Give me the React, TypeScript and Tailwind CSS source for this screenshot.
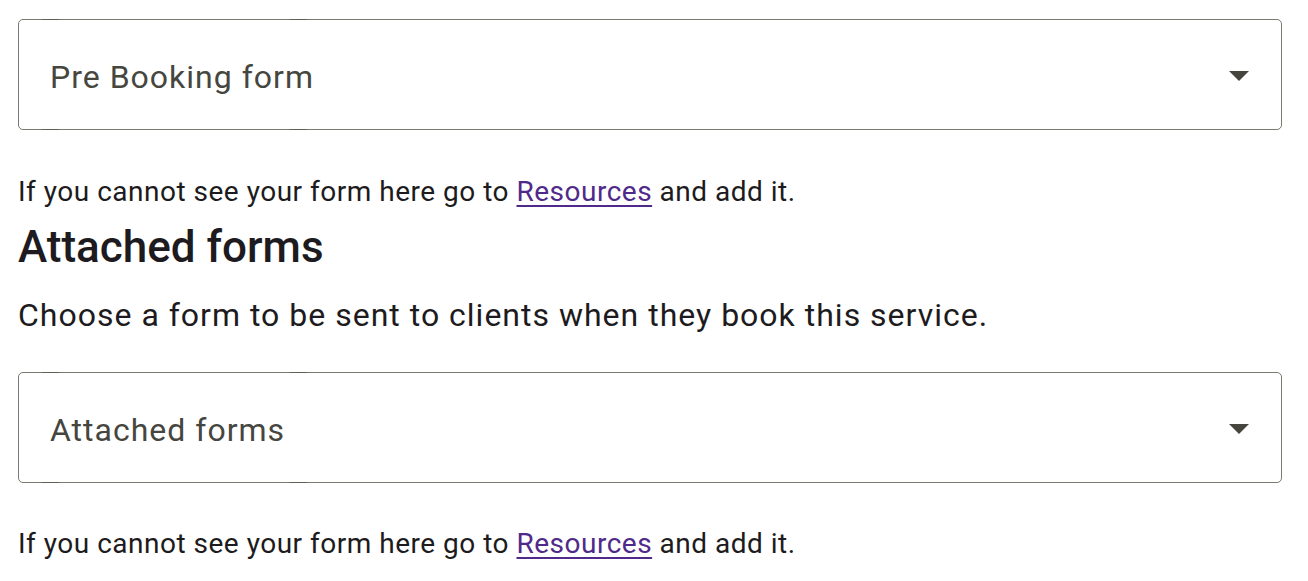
import React from "react";

interface SelectBoxProps {
  label: string;
}

function SelectBox({ label }: SelectBoxProps) {
  return (
    <div className="relative h-[111px] w-full rounded-[5px] border border-[#7a7a70] bg-white flex items-center justify-between pl-[31px] pr-[18px]">
      {/* notch marks left by the outlined field */}
      <span className="absolute -top-px left-[23px] h-px w-[17px] bg-[#5f5f57]" />
      <span className="absolute -top-px left-[271px] h-px w-[17px] bg-[#5f5f57]" />
      <span className="absolute -bottom-px left-[23px] h-px w-[17px] bg-[#5f5f57]" />
      <span className="absolute -bottom-px left-[271px] h-px w-[17px] bg-[#5f5f57]" />
      <span className="text-[32px] leading-[48px] tracking-[1px] text-[#46463f] mt-[4px]">{label}</span>
      <svg width="48" height="48" viewBox="0 0 24 24" className="fill-[#46463f]">
        <path d="M7 10l5 5 5-5z" />
      </svg>
    </div>
  );
}

function HelperText() {
  return (
    <p className="text-[28px] leading-[40px] tracking-[0.5px] text-[#1d1b20]">
      If you cannot see your form here go to{" "}
      <a href="#" className="text-[#4f2a8a] underline underline-offset-[4px] decoration-[1.5px]">
        Resources
      </a>{" "}
      and add it.
    </p>
  );
}

export default function App() {
  return (
    <div className="min-h-screen bg-white px-[18px] pt-[19px]" style={{ fontFamily: "Roboto, 'Noto Sans', sans-serif" }}>
      <div className="w-[1264px] flex flex-col">
        <SelectBox label="Pre Booking form" />
        <div className="mt-[42px]">
          <HelperText />
        </div>
        <h2 className="text-[44px] leading-[56px] font-medium text-[#1d1b20] mt-[7px]">Attached forms</h2>
        <p className="text-[32px] leading-[48px] tracking-[1px] text-[#1d1b20] mt-[16px]">
          Choose a form to be sent to clients when they book this service.
        </p>
        <div className="mt-[33px]">
          <SelectBox label="Attached forms" />
        </div>
        <div className="mt-[41px]">
          <HelperText />
        </div>
      </div>
    </div>
  );
}
